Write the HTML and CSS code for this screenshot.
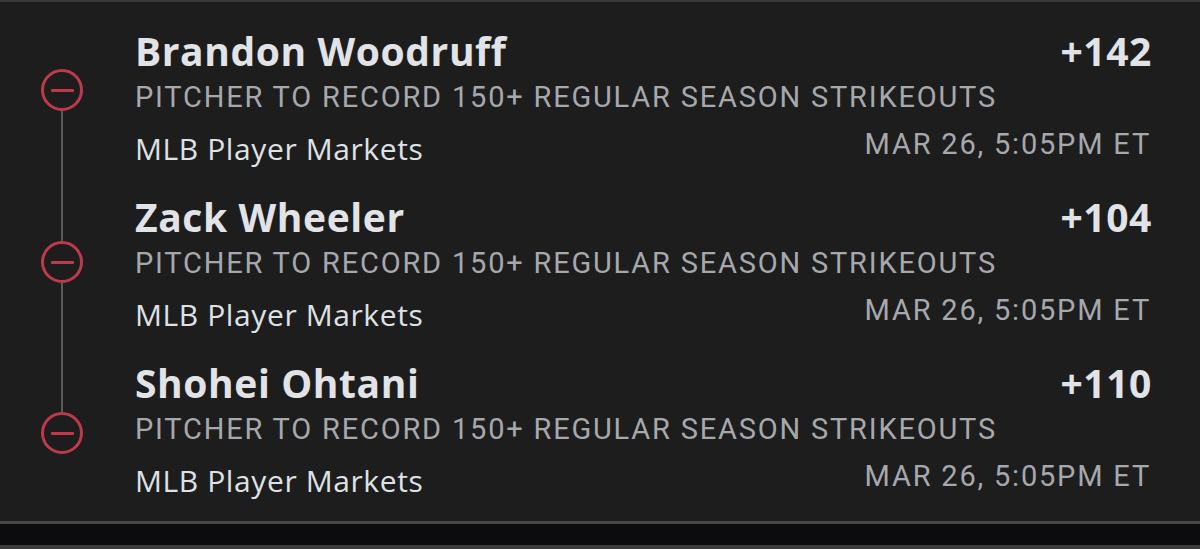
FILE: index.html
```html
<!DOCTYPE html>
<html>
<head>
<meta charset="utf-8">
<link rel="stylesheet" href="styles.css">
</head>
<body>
<div class="screen">
  <div class="list">
    <div class="timeline">
      <div class="remove"><span class="minus"></span></div>
      <div class="rail rail-1"></div>
      <div class="remove"><span class="minus"></span></div>
      <div class="rail rail-2"></div>
      <div class="remove"><span class="minus"></span></div>
    </div>
    <div class="rows">
      <div class="leg">
        <div class="line-top">
          <span class="player">Brandon Woodruff</span>
          <span class="odds">+142</span>
        </div>
        <div class="market">PITCHER TO RECORD 150+ REGULAR SEASON STRIKEOUTS</div>
        <div class="line-bottom">
          <span class="league">MLB Player Markets</span>
          <span class="date">MAR 26, 5:05PM ET</span>
        </div>
      </div>
      <div class="leg">
        <div class="line-top">
          <span class="player">Zack Wheeler</span>
          <span class="odds">+104</span>
        </div>
        <div class="market">PITCHER TO RECORD 150+ REGULAR SEASON STRIKEOUTS</div>
        <div class="line-bottom">
          <span class="league">MLB Player Markets</span>
          <span class="date">MAR 26, 5:05PM ET</span>
        </div>
      </div>
      <div class="leg">
        <div class="line-top">
          <span class="player">Shohei Ohtani</span>
          <span class="odds">+110</span>
        </div>
        <div class="market">PITCHER TO RECORD 150+ REGULAR SEASON STRIKEOUTS</div>
        <div class="line-bottom">
          <span class="league">MLB Player Markets</span>
          <span class="date">MAR 26, 5:05PM ET</span>
        </div>
      </div>
    </div>
  </div>
  <div class="footer-bar"></div>
</div>
</body>
</html>
```

FILE: styles.css
```css
html, body {
  margin: 0;
  padding: 0;
  background: #1d1d1d;
}

.screen {
  width: 1200px;
  height: 549px;
  display: flex;
  flex-direction: column;
  background: #1d1d1d;
  border-top: 2px solid #3a3a3a;
  box-sizing: border-box;
  overflow: hidden;
}

.list {
  height: 522px;
  display: flex;
  border-bottom: 3px solid #474747;
  box-sizing: border-box;
  flex: none;
}

.timeline {
  width: 42px;
  margin-left: 41px;
  padding-top: 67px;
  display: flex;
  flex-direction: column;
  align-items: center;
}

.remove {
  width: 42px;
  height: 42px;
  border: 3px solid #c0394a;
  border-radius: 50%;
  box-sizing: border-box;
  display: flex;
  align-items: center;
  justify-content: center;
  flex: none;
}

.minus {
  width: 23px;
  height: 3px;
  background: #c0394a;
  border-radius: 1px;
}

.rail {
  width: 2px;
  background: #5a5a5c;
  flex: none;
}

.rail-1 { height: 130px; }
.rail-2 { height: 129px; }

.rows {
  margin-left: 52px;
  width: 1018px;
  display: flex;
  flex-direction: column;
}

.leg {
  height: 166px;
  flex: none;
}

.line-top {
  display: flex;
  justify-content: space-between;
  align-items: baseline;
  height: 50px;
  padding-top: 25px;
}

.player,
.odds {
  font-family: "Open Sans", "Lato", sans-serif;
  font-weight: 700;
  font-size: 39px;
  line-height: 48px;
  letter-spacing: 0.6px;
  color: #e1e3e7;
}

.odds {
  margin-right: 1px;
}

.market {
  font-family: "Roboto", "Liberation Sans", sans-serif;
  font-size: 29px;
  line-height: 40px;
  letter-spacing: 1.8px;
  color: #a6a8ac;
  white-space: nowrap;
}

.line-bottom {
  display: flex;
  justify-content: space-between;
  align-items: flex-start;
  margin-top: 8px;
}

.league {
  font-family: "Open Sans", "Lato", sans-serif;
  font-size: 30px;
  line-height: 40px;
  letter-spacing: 0.6px;
  color: #dfe1e5;
  padding-top: 4px;
}

.date {
  font-family: "Roboto", "Liberation Sans", sans-serif;
  font-size: 29px;
  line-height: 40px;
  letter-spacing: 1.8px;
  color: #a6a8ac;
  margin-right: 2px;
  margin-top: -1px;
}

.footer-bar {
  height: 25px;
  background: #0c0c0e;
  border-bottom: 4px solid #3c3c3c;
  box-sizing: border-box;
  flex: none;
}
```
